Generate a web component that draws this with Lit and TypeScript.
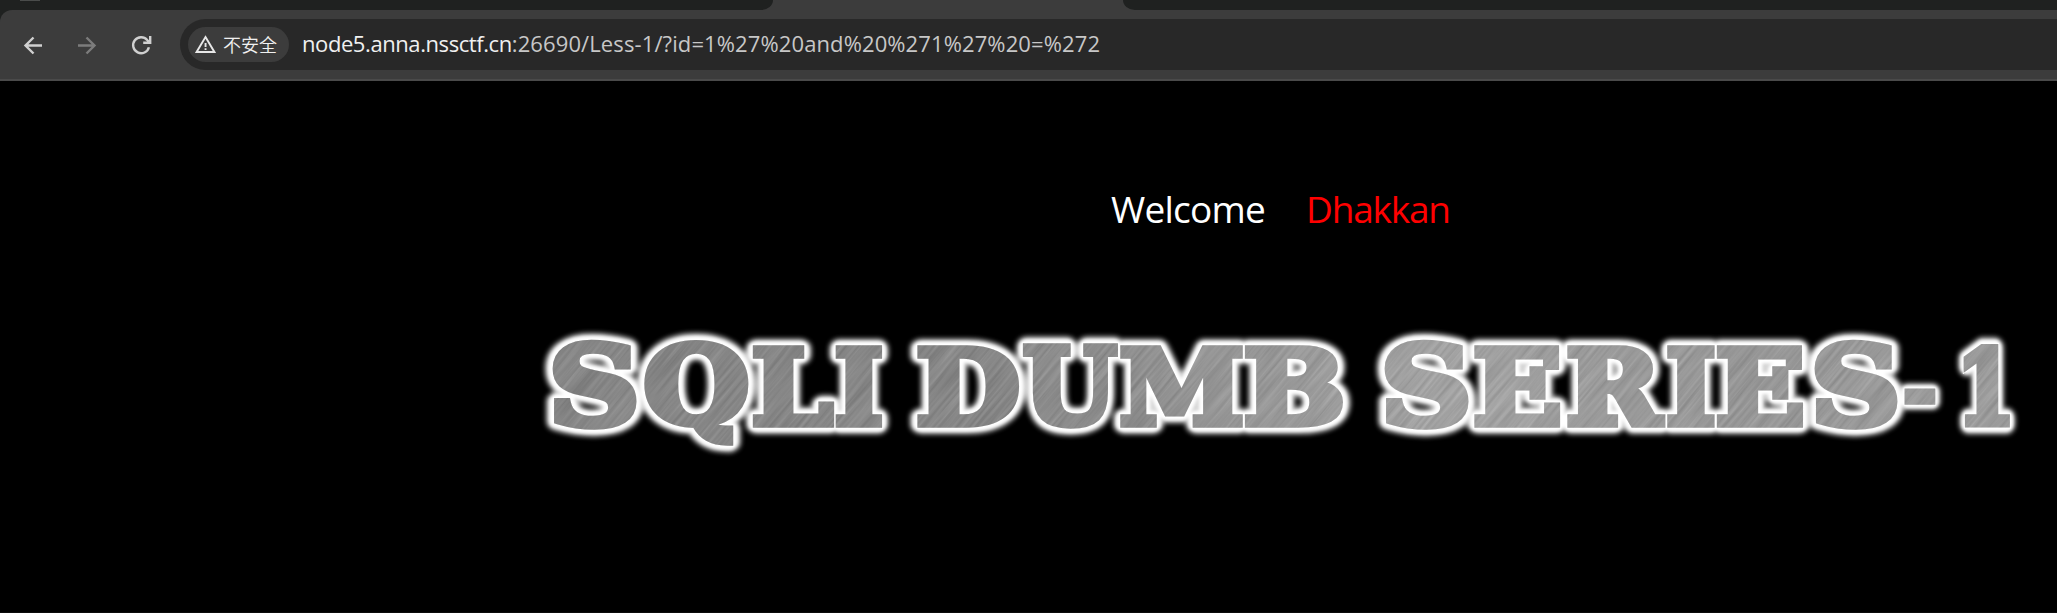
import { LitElement, html, css, svg } from "lit";
import { customElement } from "lit/decorators.js";

interface Glyph { ch: string; x: number; r: number; t: number; b: number; }

// Ink boxes of the banner letters, in banner coordinates.
const CAP_T = 44, CAP_B = 127.5;
const g = (ch: string, x: number, r: number, t = CAP_T, b = CAP_B): Glyph => ({ ch, x, r, t, b });
const WORDS: Glyph[] = [
  g("S", 552, 637, 40, 130), g("Q", 643.5, 749, 39, 146), g("L", 752.5, 834.5), g("I", 835.5, 883),
  g("D", 917, 1020), g("U", 1022, 1118, 44, 130), g("M", 1119.5, 1243), g("B", 1244.5, 1344),
  g("S", 1384, 1469, 40, 130), g("E", 1474, 1561), g("R", 1567, 1666), g("I", 1667, 1715.5),
  g("E", 1716.5, 1804), g("S", 1814, 1898, 40, 130), g("-", 1904.5, 1936, 88, 105), g("1", 1963, 2010),
];
const SIZE = 114;
const FONT = `bold ${SIZE}px "DejaVu Serif"`;
// Half of the stroke that thickens each letter.
const PAD = 4;

@customElement("metal-banner")
export class MetalBanner extends LitElement {
  static styles = css`
    :host { display: block; }
    svg { display: block; }
    text { font: bold 114px "DejaVu Serif", serif; }
    .glow { fill: #fff; stroke: #fff; stroke-width: 22px; stroke-linejoin: round; }
    .edge { fill: #fff; stroke: #fff; stroke-width: 16px; stroke-linejoin: round; }
    .ink { fill: #fff; stroke: #fff; stroke-width: 8px; stroke-linejoin: miter; }
    .rim { fill: none; stroke: #fff; stroke-width: 10px; stroke-linejoin: miter; }
  `;

  private glyphs() {
    const ctx = document.createElement("canvas").getContext("2d")!;
    ctx.font = FONT;
    return WORDS.map((w) => {
      const m = ctx.measureText(w.ch);
      const left = -m.actualBoundingBoxLeft, right = m.actualBoundingBoxRight;
      const top = -m.actualBoundingBoxAscent, bottom = m.actualBoundingBoxDescent;
      // The stroke scales with the letter, so it is part of the box that is fitted.
      const sx = (w.r - w.x) / (right - left + 2 * PAD);
      const sy = (w.b - w.t) / (bottom - top + 2 * PAD);
      const tx = w.x - (left - PAD) * sx, ty = w.t - (top - PAD) * sy;
      return svg`<text transform="translate(${tx} ${ty}) scale(${sx} ${sy})">${w.ch}</text>`;
    });
  }

  render() {
    return html`<svg width="2057" height="190" viewBox="0 0 2057 190">
      <defs>
        <filter id="soft" x="0" y="0" width="2057" height="190" filterUnits="userSpaceOnUse">
          <feGaussianBlur stdDeviation="2.6"></feGaussianBlur>
        </filter>
        <filter id="mild" x="0" y="0" width="2057" height="190" filterUnits="userSpaceOnUse">
          <feGaussianBlur stdDeviation="1.4"></feGaussianBlur>
        </filter>
        <filter id="brush" x="0" y="0" width="100%" height="100%" color-interpolation-filters="sRGB">
          <feTurbulence type="fractalNoise" baseFrequency="0.012 0.3" numOctaves="3" seed="4"></feTurbulence>
          <feColorMatrix values="0.75 0 0 0 0.18  0.75 0 0 0 0.18  0.75 0 0 0 0.18  0 0 0 0 1"></feColorMatrix>
        </filter>
        <linearGradient id="tone" gradientUnits="userSpaceOnUse" x1="540" y1="0" x2="2020" y2="0">
          <stop offset="0" stop-color="#848484"></stop>
          <stop offset="0.3" stop-color="#858585"></stop>
          <stop offset="0.5" stop-color="#9a9a9a"></stop>
          <stop offset="0.6" stop-color="#a8a8a8"></stop>
          <stop offset="0.8" stop-color="#989898"></stop>
          <stop offset="1" stop-color="#a0a0a0"></stop>
        </linearGradient>
        <g id="word">${this.glyphs()}</g>
        <mask id="letters" maskUnits="userSpaceOnUse" x="0" y="0" width="2057" height="190"><use class="ink" href="#word"></use></mask>
      </defs>
      <g filter="url(#soft)" opacity="0.85"><use class="glow" href="#word"></use></g>
      <g filter="url(#mild)"><use class="edge" href="#word"></use></g>
      <use class="rim" href="#word"></use>
      <g mask="url(#letters)">
        <g transform="translate(540 0) rotate(-50)">
          <rect x="-200" y="-100" width="1300" height="1500" filter="url(#brush)"></rect>
        </g>
        <rect x="500" width="1557" height="190" fill="url(#tone)" opacity="0.78"></rect>
      </g>
    </svg>`;
  }
}

@customElement("app-root")
export class AppRoot extends LitElement {
  static styles = css`
    :host { display: flex; flex-direction: column; height: 613px; background: #000; overflow: hidden;
      font-family: "Open Sans", "Noto Sans", sans-serif; }
    .strip { display: flex; height: 10px; background: #3c3c3c; flex: none; }
    .tabs-left { width: 773px; background: #1f2120; border-bottom-right-radius: 14px 12px; }
    .mark { width: 20px; height: 1px; margin-left: 20px; background: #4a4c4b; }
    .active { width: 350px; }
    .tabs-right { flex: 1; background: #1f2120; border-bottom-left-radius: 14px 12px; }
    .corner { background: #1f2120; flex: none; }
    .toolbar { height: 69px; box-sizing: border-box; padding-top: 9px; display: flex; background: #3c3c3c;
      border-top-left-radius: 12px; }
    .line { height: 2px; background: #4a4a4a; flex: none; }
    .nav { display: flex; width: 180px; height: 51px; align-items: center; flex: none; }
    .nav svg { flex: none; }
    .back { margin-left: 22px; }
    .fwd { margin-left: 30px; }
    .reload { margin-left: 30px; }
    .omni { flex: 1; height: 51px; background: #282828; border-radius: 26px 0 0 26px; display: flex;
      align-items: center; padding-left: 8px; white-space: nowrap; }
    .chip { width: 101px; height: 35px; border-radius: 18px; background: #3c3c3c; display: flex; align-items: center;
      box-sizing: border-box; padding-left: 7px; color: #f0f0f0; flex: none; }
    .chip span { font: 350 18px "Noto Sans CJK SC", sans-serif; margin-left: 7px; line-height: 35px; }
    .url { margin: -2px 0 0 13px; font-size: 22px; line-height: 51px; letter-spacing: 0.11px; color: #c7c7c7; }
    .url b { font-weight: 400; color: #f0f0f0; letter-spacing: -0.42px; }
    .page { flex: 1; display: flex; flex-direction: column; border-bottom: 1px solid #0c0c0c; box-sizing: border-box; }
    .welcome { display: flex; margin: 97px 0 0 1111px; font-size: 37px; line-height: 62px; color: #fff; white-space: nowrap; }
    .hello { width: 195px; letter-spacing: -0.75px; }
    .name { color: #f00; letter-spacing: -1.2px; }
    metal-banner { margin-top: 60px; }
  `;

  render() {
    return html`
      <div class="strip"><div class="tabs-left"><div class="mark"></div></div><div class="active"></div><div class="tabs-right"></div></div>
      <div class="corner"><div class="toolbar">
        <div class="nav">
          <svg class="back" width="24" height="24" viewBox="0 0 24 24" fill="none" stroke="#d0d0d0" stroke-width="2.4"><path d="M20 12.5H4M11.5 4.5L3.5 12.5L11.5 20.5"></path></svg>
          <svg class="fwd" width="24" height="24" viewBox="0 0 24 24" fill="none" stroke="#7c7c7c" stroke-width="2.4"><path d="M2 12.5H18M10.5 4.5L18.5 12.5L10.5 20.5"></path></svg>
          <svg class="reload" width="24" height="24" viewBox="0 0 24 24" fill="none" stroke="#d0d0d0" stroke-width="2.4"><path d="M18.9 14.2A8 8 0 1 1 17.2 7L19.7 9.5M20.2 3V9.8H13.2"></path></svg>
        </div>
        <div class="omni">
          <div class="chip">
            <svg width="21" height="19" viewBox="0 0 21 19"><path d="M10.5 2L19.4 17H1.6Z" fill="none" stroke="#e8e8e8" stroke-width="1.9"></path><path d="M9.6 8h1.9v4H9.6zM9.6 13.2h1.9V15H9.6z" fill="#e8e8e8"></path></svg>
            <span>不安全</span>
          </div>
          <div class="url"><b>node5.anna.nssctf.cn</b>:26690/Less-1/?id=1%27%20and%20%271%27%20=%272</div>
        </div>
      </div></div>
      <div class="line"></div>
      <div class="page">
        <div class="welcome"><span class="hello">Welcome</span><span class="name">Dhakkan</span></div>
        <metal-banner></metal-banner>
      </div>`;
  }
}
